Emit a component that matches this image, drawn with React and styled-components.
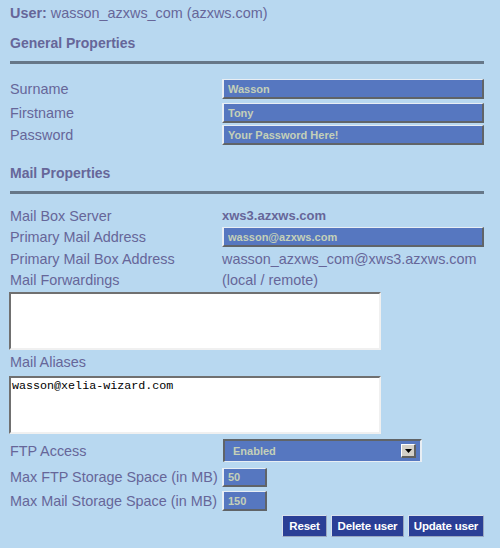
import styled, { createGlobalStyle } from "styled-components";

const Global = createGlobalStyle`
  body {
    margin: 0;
    background: #b8d8f0;
    font-family: "Liberation Sans", Arial, sans-serif;
    color: #666699;
  }
`

const Page = styled.div`
  width: 474px;
  padding: 0 16px 0 10px;
`

const UserLine = styled.div`
  height: 26px;
  line-height: 26px;
  font-size: 14.4px;
  b { font-weight: 700; }
`

const Heading = styled.h3`
  margin: ${p => p.$top}px 0 0;
  height: 26px;
  line-height: 26px;
  font-size: 14px;
  font-weight: 700;
`

const Rule = styled.div`
  margin: 5px 0 ${p => p.$bottom}px;
  height: 3px;
  background: #667788;
`

const Row = styled.div`
  display: grid;
  grid-template-columns: 212px 1fr;
  align-items: ${p => p.$align || "center"};
  height: ${p => p.$h}px;
  margin-top: ${p => p.$top || 0}px;
  font-size: 14.4px;
`

const Label = styled.span`
  line-height: 20px;
  white-space: nowrap;
`

const Value = styled.span`
  font-size: ${p => (p.$bold ? 13 : 14.4)}px;
  font-weight: ${p => (p.$bold ? 700 : 400)};
  white-space: nowrap;
`

const Field = styled.input`
  box-sizing: border-box;
  width: ${p => p.$w || 262}px;
  height: ${p => p.$h || 20}px;
  padding: 0 4px;
  margin: 0;
  background: #5677c0;
  border-style: solid;
  border-width: 1px 2px 2px 2px;
  border-color: #e8eef4 #606468 #606468 #e8eef4;
  color: #c4d0b8;
  font-family: "Liberation Sans", Arial, sans-serif;
  font-size: 11px;
  font-weight: 700;
  outline: none;
`

const Area = styled.textarea`
  display: block;
  box-sizing: border-box;
  width: 372px;
  height: 58px;
  margin: ${p => p.$top}px 0 0 -1px;
  padding: 1px 1px;
  border-style: solid;
  border-width: 2px;
  border-color: #707070 #f0f0f0 #f0f0f0 #707070;
  background: #fff;
  color: #000;
  font-family: "Liberation Mono", "Courier New", monospace;
  font-size: 11.7px;
  line-height: 14px;
  resize: none;
  outline: none;
`

const Dropdown = styled.div`
  box-sizing: border-box;
  width: 199px;
  height: 23px;
  margin-left: 1px;
  display: flex;
  align-items: center;
  justify-content: space-between;
  padding: 0 4px 0 8px;
  background: #5677c0;
  border-style: solid;
  border-width: 2px 2px 1px 2px;
  border-color: #606468 #e8eef4 #e8eef4 #606468;
  color: #c4d0b8;
  font-size: 11px;
  font-weight: 700;
`

const ArrowBox = styled.span`
  box-sizing: border-box;
  width: 15px;
  height: 14px;
  display: flex;
  align-items: center;
  justify-content: center;
  background: #d4d0c8;
  border-style: solid;
  border-width: 1px 2px 2px 1px;
  border-color: #ffffff #606060 #606060 #ffffff;
`

const Buttons = styled.div`
  display: flex;
  justify-content: flex-end;
  gap: 4px;
  margin-top: 4px;
`

const Button = styled.button`
  box-sizing: border-box;
  width: ${p => p.$w}px;
  height: 22px;
  padding: 0;
  background: #2a3f96;
  border: 1px solid #d8e0ec;
  border-right-color: #9aa8c0;
  border-bottom-color: #9aa8c0;
  color: #fff;
  font-family: "Liberation Sans", Arial, sans-serif;
  font-size: 11.5px;
  font-weight: 700;
  letter-spacing: -0.2px;
`

const App = () => (
  <>
    <Global />
    <Page>
      <UserLine><b>User:</b> wasson_azxws_com (azxws.com)</UserLine>

      <Heading $top={4}>General Properties</Heading>
      <Rule $bottom={13} />
      <Row $h={24}><Label>Surname</Label><Field defaultValue="Wasson" /></Row>
      <Row $h={24}><Label>Firstname</Label><Field defaultValue="Tony" /></Row>
      <Row $h={20}><Label>Password</Label><Field defaultValue="Your Password Here!" /></Row>

      <Heading $top={15}>Mail Properties</Heading>
      <Rule $bottom={10} />
      <Row $h={23}><Label>Mail Box Server</Label><Value $bold>xws3.azxws.com</Value></Row>
      <Row $h={21} $align="start"><Label>Primary Mail Address</Label><Field defaultValue="wasson@azxws.com" /></Row>
      <Row $h={22}><Label>Primary Mail Box Address</Label><Value>wasson_azxws_com@xws3.azxws.com</Value></Row>
      <Row $h={18}><Label>Mail Forwardings</Label><Value>(local / remote)</Value></Row>
      <Area $top={4} defaultValue="" />
      <Row $h={24}><Label>Mail Aliases</Label></Row>
      <Area $top={2} defaultValue="wasson@xelia-wizard.com" />

      <Row $h={23} $top={5}>
        <Label>FTP Access</Label>
        <Dropdown>
          Enabled
          <ArrowBox>
            <svg width="7" height="4" viewBox="0 0 7 4"><path d="M0 0h7L3.5 4z" fill="#000" /></svg>
          </ArrowBox>
        </Dropdown>
      </Row>
      <Row $h={20} $top={5}><Label>Max FTP Storage Space (in MB)</Label><Field $w={45} $h={19} defaultValue="50" /></Row>
      <Row $h={20} $top={4}><Label>Max Mail Storage Space (in MB)</Label><Field $w={45} defaultValue="150" /></Row>

      <Buttons>
        <Button $w={45}>Reset</Button>
        <Button $w={73}>Delete user</Button>
        <Button $w={76}>Update user</Button>
      </Buttons>
    </Page>
  </>
)

export default App
